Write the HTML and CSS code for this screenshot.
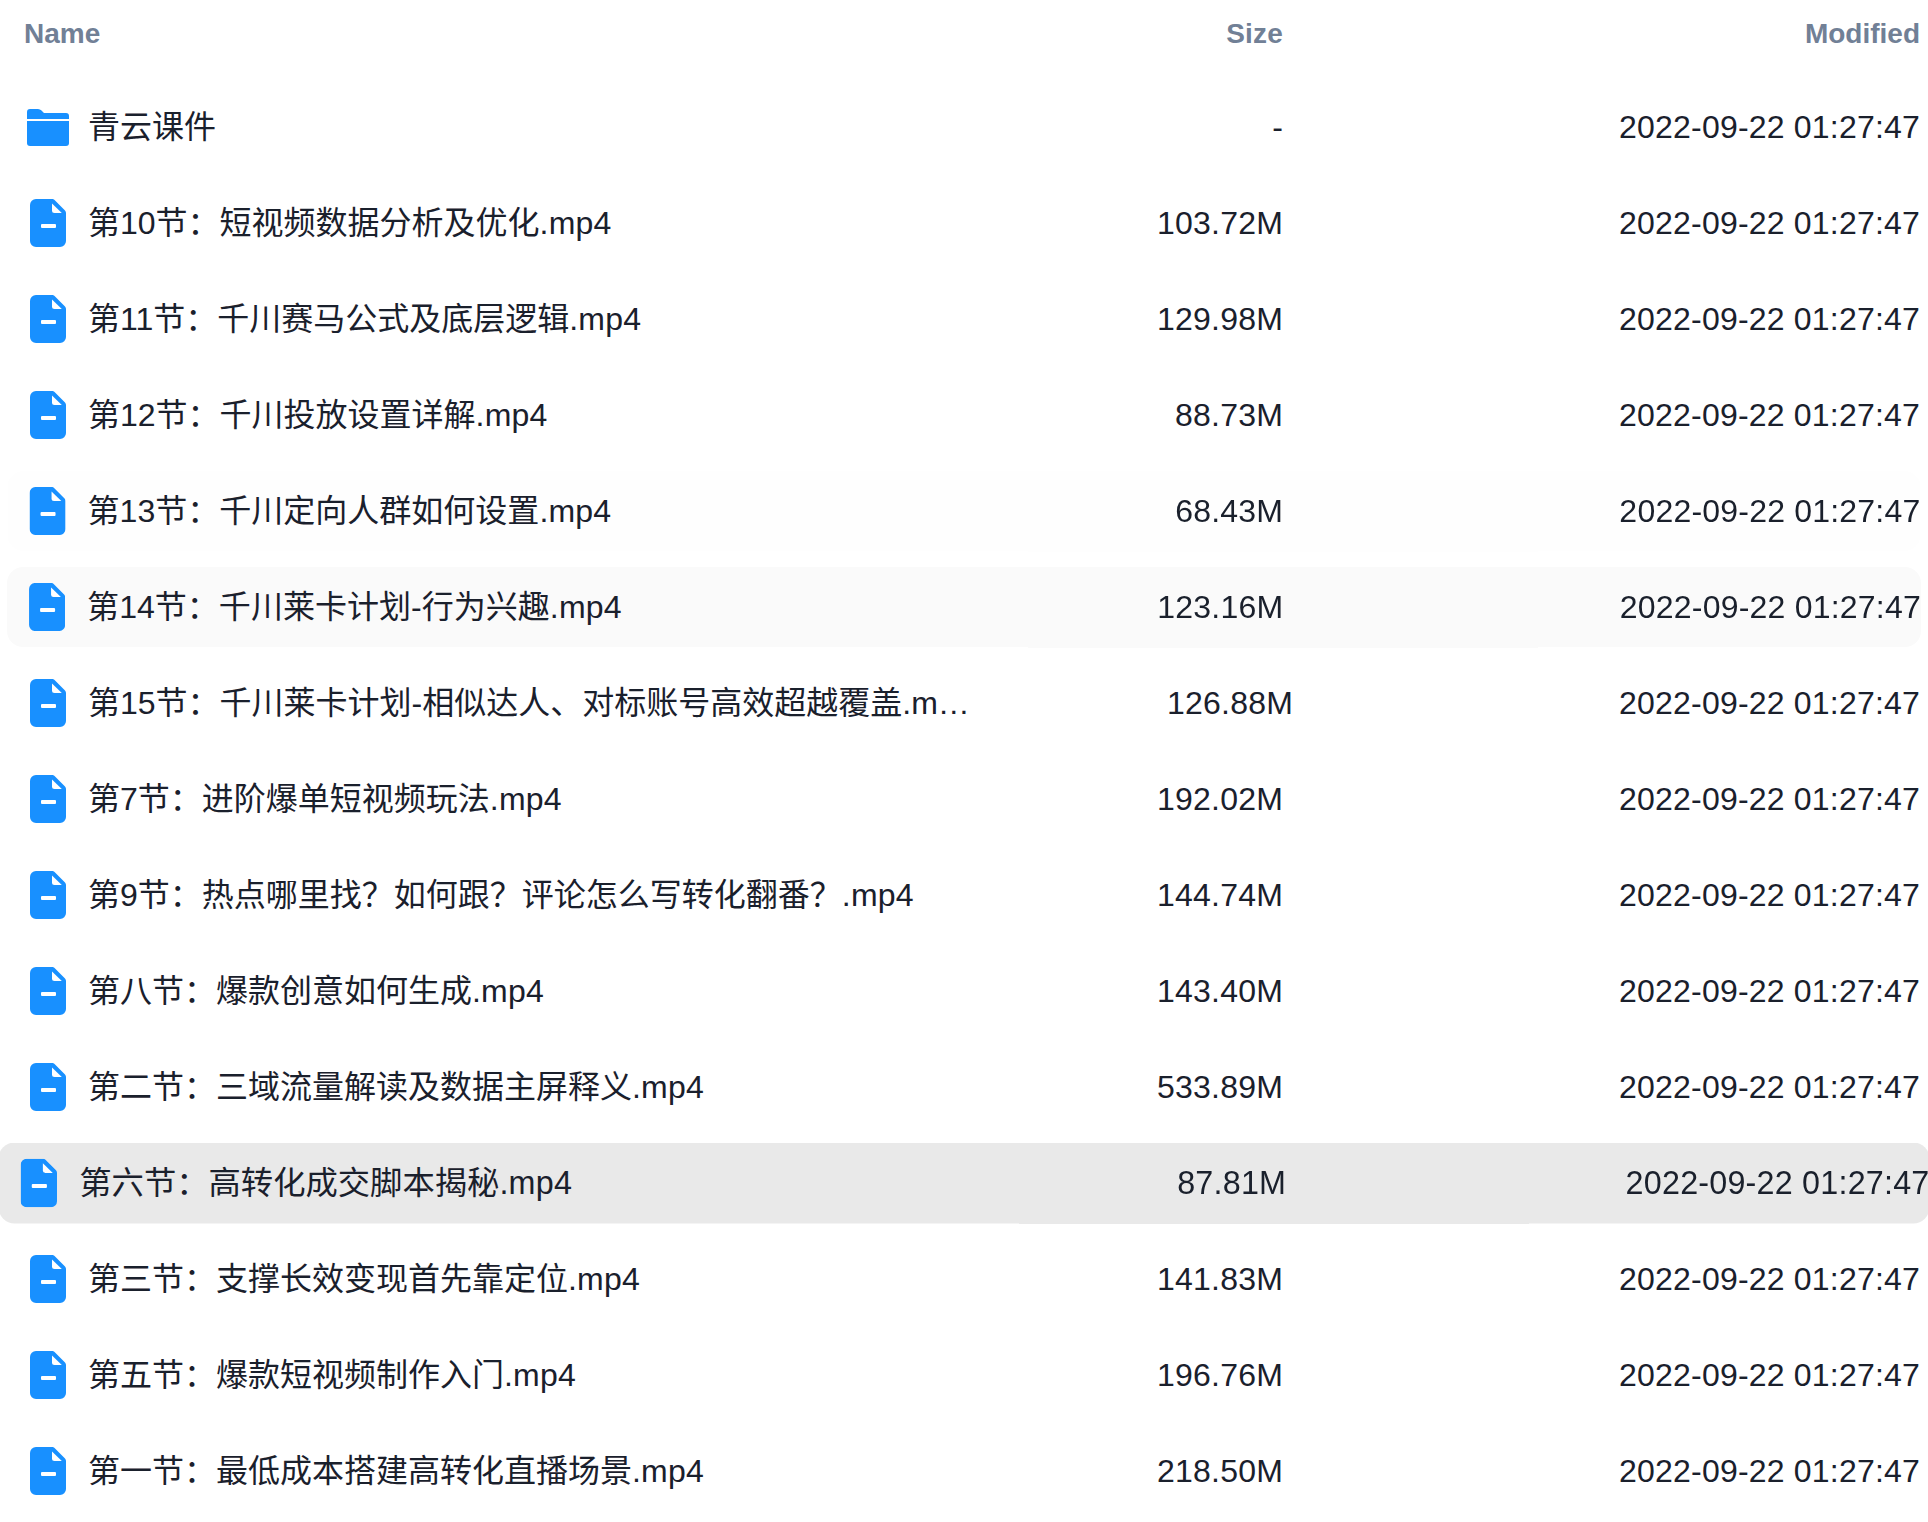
FILE: index.html
```html
<!DOCTYPE html>
<html lang="en">
<head>
    <meta charset="UTF-8">
    <title>Files</title>
    <link rel="stylesheet" href="styles.css">
</head>
<body>
    <svg class="defs" width="0" height="0">
        <symbol id="file" viewBox="0 0 36 48">
            <path fill="#1890ff" d="M6 0H22.5Q23.5 0 24.3 .8L35 11.5Q36 12.5 36 14V42A6 6 0 0 1 30 48H6A6 6 0 0 1 0 42V6A6 6 0 0 1 6 0Z"/>
            <path fill="#fff" d="M22 4.500L31.800 14H24.500Q22 14 22 11.500Z"/>
            <rect fill="#fff" x="11" y="25" width="15" height="4" rx="1"/>
        </symbol>
        <symbol id="folder" viewBox="0 0 42 37">
            <path fill="#1890ff" d="M0 10V3Q0 0 3 0H11Q13 0 14.500 1.500L17 4H39Q42 4 42 7V10Z"/>
            <path fill="#1890ff" d="M0 12H42V34Q42 37 39 37H3Q0 37 0 34Z"/>
        </symbol>
    </svg>

    <div class="head">
        <div class="name-h">Name</div>
        <div class="size">Size</div>
        <div class="date">Modified</div>
    </div>

    <div class="row">
        <span class="ico"><svg class="i-folder"><use href="#folder"/></svg></span>
        <div class="name">青云课件</div><div class="size">-</div><div class="date">2022-09-22 01:27:47</div>
    </div>
    <div class="row">
        <span class="ico"><svg class="i-file"><use href="#file"/></svg></span>
        <div class="name">第10节：短视频数据分析及优化<span class="ext">.mp4</span></div><div class="size">103.72M</div><div class="date">2022-09-22 01:27:47</div>
    </div>
    <div class="row">
        <span class="ico"><svg class="i-file"><use href="#file"/></svg></span>
        <div class="name">第11节：千川赛马公式及底层逻辑<span class="ext">.mp4</span></div><div class="size">129.98M</div><div class="date">2022-09-22 01:27:47</div>
    </div>
    <div class="row">
        <span class="ico"><svg class="i-file"><use href="#file"/></svg></span>
        <div class="name">第12节：千川投放设置详解<span class="ext">.mp4</span></div><div class="size">88.73M</div><div class="date">2022-09-22 01:27:47</div>
    </div>
    <div class="row fading-out">
        <span class="ico"><svg class="i-file"><use href="#file"/></svg></span>
        <div class="name">第13节：千川定向人群如何设置<span class="ext">.mp4</span></div><div class="size">68.43M</div><div class="date">2022-09-22 01:27:47</div>
    </div>
    <div class="row fading">
        <span class="ico"><svg class="i-file"><use href="#file"/></svg></span>
        <div class="name">第14节：千川莱卡计划-行为兴趣<span class="ext">.mp4</span></div><div class="size">123.16M</div><div class="date">2022-09-22 01:27:47</div>
    </div>
    <div class="row long">
        <span class="ico"><svg class="i-file"><use href="#file"/></svg></span>
        <div class="name">第15节：千川莱卡计划-相似达人、对标账号高效超越覆盖.mp4</div><div class="size">126.88M</div><div class="date">2022-09-22 01:27:47</div>
    </div>
    <div class="row">
        <span class="ico"><svg class="i-file"><use href="#file"/></svg></span>
        <div class="name">第7节：进阶爆单短视频玩法<span class="ext">.mp4</span></div><div class="size">192.02M</div><div class="date">2022-09-22 01:27:47</div>
    </div>
    <div class="row">
        <span class="ico"><svg class="i-file"><use href="#file"/></svg></span>
        <div class="name">第9节：热点哪里找？如何跟？评论怎么写转化翻番？<span class="ext">.mp4</span></div><div class="size">144.74M</div><div class="date">2022-09-22 01:27:47</div>
    </div>
    <div class="row">
        <span class="ico"><svg class="i-file"><use href="#file"/></svg></span>
        <div class="name">第八节：爆款创意如何生成<span class="ext">.mp4</span></div><div class="size">143.40M</div><div class="date">2022-09-22 01:27:47</div>
    </div>
    <div class="row">
        <span class="ico"><svg class="i-file"><use href="#file"/></svg></span>
        <div class="name">第二节：三域流量解读及数据主屏释义<span class="ext">.mp4</span></div><div class="size">533.89M</div><div class="date">2022-09-22 01:27:47</div>
    </div>
    <div class="row active">
        <span class="ico"><svg class="i-file"><use href="#file"/></svg></span>
        <div class="name">第六节：高转化成交脚本揭秘<span class="ext">.mp4</span></div><div class="size">87.81M</div><div class="date">2022-09-22 01:27:47</div>
    </div>
    <div class="row">
        <span class="ico"><svg class="i-file"><use href="#file"/></svg></span>
        <div class="name">第三节：支撑长效变现首先靠定位<span class="ext">.mp4</span></div><div class="size">141.83M</div><div class="date">2022-09-22 01:27:47</div>
    </div>
    <div class="row">
        <span class="ico"><svg class="i-file"><use href="#file"/></svg></span>
        <div class="name">第五节：爆款短视频制作入门<span class="ext">.mp4</span></div><div class="size">196.76M</div><div class="date">2022-09-22 01:27:47</div>
    </div>
    <div class="row">
        <span class="ico"><svg class="i-file"><use href="#file"/></svg></span>
        <div class="name">第一节：最低成本搭建高转化直播场景<span class="ext">.mp4</span></div><div class="size">218.50M</div><div class="date">2022-09-22 01:27:47</div>
    </div>
</body>
</html>
```

FILE: styles.css
```css
* {
    margin: 0;
    padding: 0;
    box-sizing: border-box;
}

body {
    background-color: white;
    padding: 0 8px;
    height: 1522px;
    overflow: hidden;
    font-family: 'Liberation Sans', 'Noto Sans CJK SC', sans-serif;
    font-size: 32px;
    line-height: 48px;
    color: #1a202c;
}

.defs {
    display: block;
}

.head {
    display: flex;
    align-items: center;
    height: 68px;
    margin-bottom: 19px;
    padding-left: 16px;
    font-size: 28px;
    font-weight: bold;
    color: #718096;
}

.name-h {
    flex: 1;
}

.row {
    display: flex;
    align-items: center;
    height: 80px;
    margin-bottom: 16px;
    padding-left: 16px;
    border-radius: 16px;
}

.ico {
    display: flex;
    justify-content: center;
    align-items: center;
    flex: none;
    width: 48px;
    margin-right: 16px;
}

.i-file {
    width: 36px;
    height: 48px;
}

.i-folder {
    width: 42px;
    height: 37px;
}

.name {
    flex: 1;
    min-width: 0;
    white-space: nowrap;
    overflow: hidden;
    text-overflow: ellipsis;
}

.ext {
    letter-spacing: 0.2px;
}

.size {
    flex: none;
    width: 200px;
    text-align: right;
    letter-spacing: 0.2px;
}

.date {
    flex: none;
    width: 637px;
    text-align: right;
    letter-spacing: 0.2px;
}

.head .date {
    letter-spacing: 0;
}

.long .name {
    flex: none;
    width: 884px;
}

.long .size {
    flex: 1;
}

.long .date {
    width: 627px;
}

.fading-out {
    background-color: #fefefe;
    transform: scale(1.0005);
}

.fading {
    background-color: #fafafa;
    transform: scale(1.001);
}

.active {
    background-color: #e9e9e9;
    transform: scale(1.01);
}
```
